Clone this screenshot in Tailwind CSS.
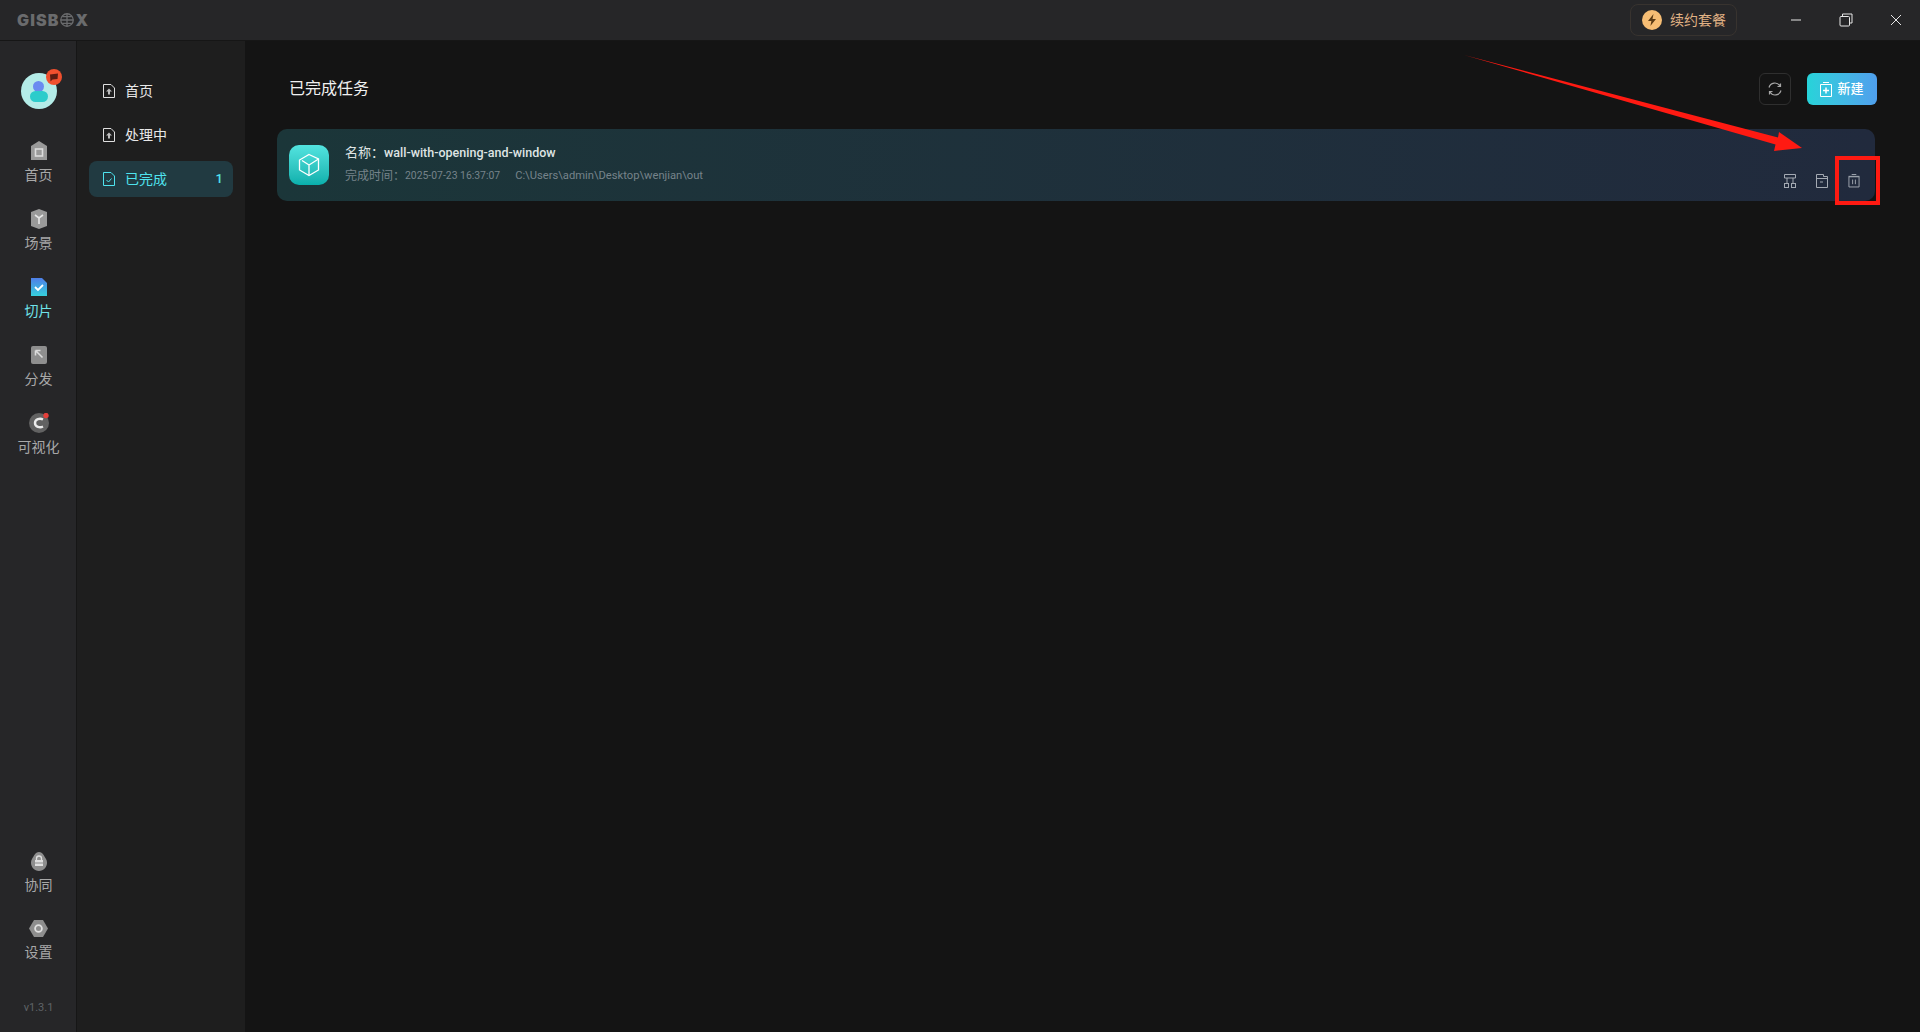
<!DOCTYPE html>
<html lang="en">
<head>
    <meta charset="UTF-8">
    <title>GISBox</title>
    <script src="https://cdn.jsdelivr.net/npm/@tailwindcss/browser@4"></script>
</head>
<body class="relative h-[1032px] w-[1920px] overflow-hidden bg-[#141414] font-['Roboto','Noto_Sans_CJK_SC',sans-serif] text-white">
    <!-- Title bar -->
    <header class="flex h-[41px] items-center justify-between border-b border-[#161616] bg-[#262628]">
        <div class="flex items-center pl-[17px]">
            <span class="text-[16px] leading-none font-black tracking-[1.1px] text-[#6a6b6d] font-['Inter',sans-serif]">GISB</span>
            <svg class="mx-[1px]" width="14" height="14" viewBox="0 0 13 13" fill="none" stroke="#6a6b6d" stroke-width="1.2"><circle cx="6.5" cy="6.5" r="5.8"/><path d="M.7 6.5h11.6M6.5.7v11.6M2 3.4h9M2 9.6h9"/></svg>
            <span class="text-[16px] leading-none font-black text-[#6a6b6d] font-['Inter',sans-serif]">X</span>
        </div>
        <div class="flex items-center">
            <div class="flex h-[32px] w-[107px] items-center gap-[8px] rounded-[8px] border border-[#38332f] pl-[11px]">
                <svg width="20" height="20" viewBox="0 0 20 20"><circle cx="10" cy="10" r="10" fill="#f6bd74"/><path d="M11.5 4 6 11h3.4l-1 5L14 9h-3.5z" fill="#5a3a14"/></svg>
                <span class="text-[14px] text-[#e0b184]">续约套餐</span>
            </div>
            <div class="ml-[53px] flex w-[130px] items-center justify-between pr-[18px]">
                <svg width="12" height="12" viewBox="0 0 12 12" stroke="#e6e6e6" fill="none"><path d="M1 6h10"/></svg>
                <svg class="ml-[33px]" width="14" height="14" viewBox="0 0 14 14" stroke="#e6e6e6" fill="none"><rect x="1" y="3.5" width="9.5" height="9.5" rx="1"/><path d="M3.5 3.5V1h9.5v9h-2.5"/></svg>
                <svg class="ml-[34px]" width="12" height="12" viewBox="0 0 12 12" stroke="#e6e6e6" fill="none"><path d="m1 1 10 10M11 1 1 11"/></svg>
            </div>
        </div>
    </header>

    <div class="flex h-[991px]">
        <!-- Icon rail -->
        <aside class="flex w-[77px] shrink-0 flex-col items-center border-r border-[#161616] bg-[#262628] pl-[1px] text-[#a8a8a8]">
            <div class="relative mt-[32px] h-[36px] w-[36px] rounded-full bg-[#b4ece8]">
                <div class="absolute top-[8px] left-[12px] h-[11px] w-[11px] rounded-full bg-[#6a8bf0]"></div>
                <div class="absolute top-[18px] left-[9px] h-[11px] w-[18px] rounded-full bg-[#2ccccb]"></div>
                <div class="absolute top-[-4px] right-[-5px] flex h-[16px] w-[16px] items-center justify-center rounded-full bg-[#f0502e]">
                    <svg width="10" height="9" viewBox="0 0 10 9"><path d="M1 1.5 9 .5l-.5 5.5-5 .5-2 2z" fill="#5a1c12"/></svg>
                </div>
            </div>
            <div class="mt-[32px] flex h-[68px] flex-col items-center">
                <svg width="16" height="19" viewBox="0 0 16 19"><path d="M8 0 16 5v14H0V5z" fill="#9a9a9a"/><rect x="4.5" y="8" width="7" height="7" fill="none" stroke="#dcdcdc" stroke-width="1.6"/></svg>
                <span class="mt-[5px] text-[14px] leading-[20px]">首页</span>
            </div>
            <div class="flex h-[68px] flex-col items-center">
                <svg width="18" height="20" viewBox="0 0 18 20"><path d="M9 0 17 3v14l-8 3-8-3V3z" fill="#9a9a9a"/><path d="M5 6l4 3 4-3M9 9v6" fill="none" stroke="#e6e6e6" stroke-width="1.6"/></svg>
                <span class="mt-[4px] text-[14px] leading-[20px]">场景</span>
            </div>
            <div class="flex h-[68px] flex-col items-center text-[#6fe3ea]">
                <svg class="mt-[1px]" width="16" height="18" viewBox="0 0 16 18"><defs><linearGradient id="slice" x1="0" y1="0" x2="0" y2="1"><stop offset="0" stop-color="#4f7ee8"/><stop offset="1" stop-color="#35d0dc"/></linearGradient></defs><path d="M0 0h11l5 5v13H0z" fill="url(#slice)"/><path d="m4 9 3 3 5-5" fill="none" stroke="#fff" stroke-width="1.8"/></svg>
                <span class="mt-[5px] text-[14px] leading-[20px]">切片</span>
            </div>
            <div class="flex h-[68px] flex-col items-center">
                <svg class="mt-[1px]" width="16" height="18" viewBox="0 0 16 18"><rect width="16" height="18" rx="2" fill="#8e8e8e"/><path d="M4.5 4.5h5M4.5 4.5v5M4.5 4.5l7 7" fill="none" stroke="#dcdcdc" stroke-width="1.6"/></svg>
                <span class="mt-[5px] text-[14px] leading-[20px]">分发</span>
            </div>
            <div class="flex h-[68px] flex-col items-center">
                <svg width="20" height="20" viewBox="0 0 20 20"><circle cx="10" cy="10" r="10" fill="#626262"/><path d="M14 6.5C11 5 6 6 6 10s5 5 8 3.5" fill="none" stroke="#ececec" stroke-width="2.4"/><circle cx="17" cy="2.5" r="2.7" fill="#e43f3a"/></svg>
                <span class="mt-[4px] text-[14px] leading-[20px]">可视化</span>
            </div>

            <div class="mt-auto flex h-[68px] flex-col items-center">
                <svg width="18" height="19" viewBox="0 0 18 19"><path d="M9 0c4 0 5 4 7 7 3 5-1 12-7 12S-1 12 2 7c2-3 3-7 7-7z" fill="#8e8e8e"/><rect x="5" y="8" width="8" height="6" fill="#e0e0e0"/><path d="M6.5 8V6.5a2.5 2.5 0 0 1 5 0V8" fill="none" stroke="#e0e0e0" stroke-width="1.3"/><path d="M5 11h8" stroke="#8e8e8e"/></svg>
                <span class="mt-[4px] text-[14px] leading-[20px]">协同</span>
            </div>
            <div class="flex h-[68px] flex-col items-center">
                <svg width="19" height="17" viewBox="0 0 19 17"><path d="M5 0h9l5 8.500-5 8.500H5L0 8.500z" fill="#8e8e8e"/><circle cx="9.500" cy="8.500" r="3.400" fill="none" stroke="#e0e0e0" stroke-width="1.800"/></svg>
                <span class="mt-[5px] text-[14px] leading-[20px]">设置</span>
            </div>
            <span class="mt-[12px] mb-[16px] text-[11px] leading-[16px] text-[#5f6367]">v1.3.1</span>
        </aside>

        <!-- Task menu -->
        <nav class="flex w-[168px] shrink-0 flex-col gap-[8px] bg-[#1e1e1e] px-[12px] pt-[32px] text-[14px]">
            <a class="flex h-[36px] items-center gap-[10px] pl-[14px] text-[#e8e8e8]">
                <svg width="12" height="14" viewBox="0 0 12 14" fill="none"><path d="M.5.5h7.500l3.500 3.500v9.500H.5z" stroke="#e0e0e0"/><path d="M6 4.500 3 7.500h2V10.500h2V7.500h2z" fill="#bdbdbd"/></svg>
                <span>首页</span>
            </a>
            <a class="flex h-[36px] items-center gap-[10px] pl-[14px] text-[#e8e8e8]">
                <svg width="12" height="14" viewBox="0 0 12 14" fill="none"><path d="M.5.5h7.500l3.500 3.500v9.500H.5z" stroke="#e0e0e0"/><path d="M6 4.500 3 7.500h2V10.500h2V7.500h2z" fill="#bdbdbd"/></svg>
                <span>处理中</span>
            </a>
            <a class="flex h-[36px] items-center gap-[10px] rounded-[8px] bg-[#213a41] pr-[10px] pl-[14px] text-[#4fe3ee]">
                <svg width="12" height="14" viewBox="0 0 12 14" fill="none" stroke="#4fe3ee"><path d="M.5.5h7.500l3.500 3.500v9.500H.5z"/><path d="m3.500 8 2 2 3-3.500"/></svg>
                <span>已完成</span>
                <span class="ml-auto text-[13px] font-medium">1</span>
            </a>
        </nav>

        <!-- Main -->
        <main class="flex-1 pt-[32px] pr-[45px] pl-[32px]">
            <div class="flex h-[32px] items-center justify-between">
                <h1 class="pl-[12px] text-[16px] font-normal text-[#f0f0f0]">已完成任务</h1>
                <div class="mr-[-2px] flex items-center gap-[16px]">
                    <button class="flex h-[32px] w-[32px] items-center justify-center rounded-[6px] border border-[#2f2f2f]">
                        <svg width="14" height="14" viewBox="0 0 14 14" fill="none" stroke="#a6a6a6" stroke-width="1.200"><path d="M1 5.500A6 6 0 0 1 12 4M13 8.500A6 6 0 0 1 2 10"/><path d="M12.500 1.500V4.500H9.500M1.500 12.500V9.500H4.500"/></svg>
                    </button>
                    <button class="flex h-[32px] w-[70px] items-center justify-center gap-[5px] rounded-[6px] bg-gradient-to-r from-[#26d3d9] to-[#4f9fed] text-[13px] font-medium text-white">
                        <svg width="12" height="15" viewBox="0 0 12 15" fill="none" stroke="#fff"><path d="M.5 2.500h11v12H.5zM3 .5h6"/><path d="M6 5.500v6M3 8.500h6" stroke-width="1.500"/></svg>
                        新建
                    </button>
                </div>
            </div>

            <!-- Task card -->
            <div class="mt-[24px] flex h-[72px] items-center rounded-[10px] bg-gradient-to-r from-[#1b3639] to-[#212a3d] pr-[12px] pl-[12px]">
                <div class="flex h-[40px] w-[40px] items-center justify-center rounded-[10px] bg-gradient-to-b from-[#52e4e0] to-[#06b0ac]">
                    <svg width="22" height="24" viewBox="0 0 22 24" fill="none" stroke="#fff" stroke-width="1.300"><path d="M11 1.500 20.500 6v11L11 22.500 1.500 17V7z"/><path d="M11 22V12l9.500-6M11 12 4 7.500" /></svg>
                </div>
                <div class="mt-[-2px] ml-[16px] flex flex-col">
                    <div class="flex items-center text-[13px] leading-[18px] text-[#dfe4e4]">
                        <span>名称：</span><span class="text-[12.5px] font-medium">wall-with-opening-and-window</span>
                    </div>
                    <div class="mt-[6px] flex items-center text-[12px] leading-[16px] text-[#76838a]">
                        <span>完成时间：</span><span class="text-[10.4px]">2025-07-23 16:37:07</span>
                        <span class="ml-[15px] text-[11.2px]">C:\Users\admin\Desktop\wenjian\out</span>
                    </div>
                </div>
                <div class="mt-[31px] ml-auto flex items-center gap-[20px] pr-[3px]">
                    <svg width="12" height="14" viewBox="0 0 12 14" fill="none" stroke="#a4aab3"><path d="M.5.500h11v3.500H.5zM3 4v5M9 4v5"/><rect x=".5" y="9.500" width="4" height="4"/><rect x="7.500" y="9.500" width="4" height="4"/></svg>
                    <svg width="12" height="14" viewBox="0 0 12 14" fill="none" stroke="#a4aab3"><path d="M.5 13.500V.5h7v2h4v11zM.5 4.500h11"/><path d="M4 8h3"/></svg>
                    <svg width="12" height="15" viewBox="0 0 13 15" fill="none" stroke="#a4aab3"><path d="M1 3.500h11v11H1zM4 1h5M.5 3h12"/><path d="M5 6.500v5M8 6.500v5"/></svg>
                </div>
            </div>
        </main>
    </div>

    <!-- Annotations drawn over the screenshot -->
    <svg class="pointer-events-none absolute inset-0" width="1920" height="1032" viewBox="0 0 1920 1032">
        <path d="M1464 55 1778 137.500 1779 132 1802 148 1774 151 1775.500 144.500z" fill="#ff1a12"/>
    </svg>
    <div class="absolute top-[156px] left-[1835px] h-[49px] w-[45px] border-4 border-[#ff1a12]"></div>
</body>
</html>
